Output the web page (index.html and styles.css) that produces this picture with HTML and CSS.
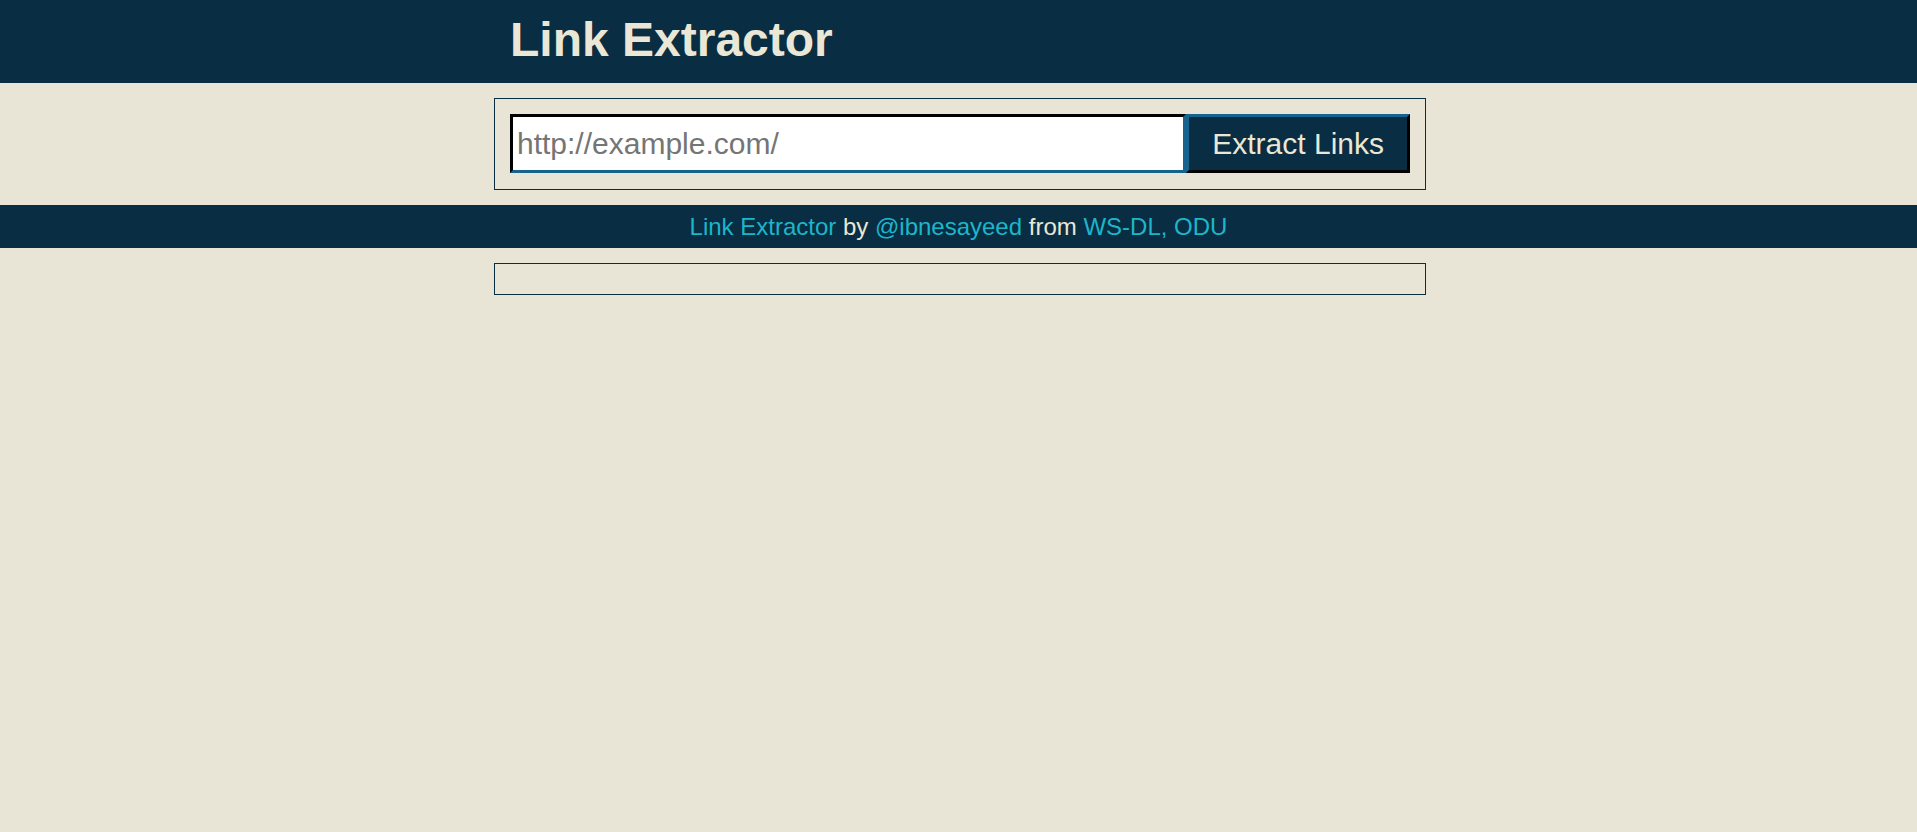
FILE: index.html
```html
<!DOCTYPE html>
<html lang="en">
<head>
<meta charset="utf-8">
<title>Link Extractor</title>
<link rel="stylesheet" href="styles.css">
</head>
<body>
<header class="site-header">
  <div class="wrap">
    <h1 class="site-title">Link Extractor</h1>
  </div>
</header>
<main class="wrap main">
  <form class="panel extract-form">
    <input class="url-input" type="text" placeholder="http://example.com/">
    <button class="extract-btn" type="button">Extract Links</button>
  </form>
</main>
<footer class="credits">
  <a href="#">Link Extractor</a> by <a href="#">@ibnesayeed</a> from <span class="org"><a href="#">WS-DL</a>, <a href="#">ODU</a></span>
</footer>
<section class="wrap results-wrap">
  <div class="panel results"></div>
</section>
</body>
</html>
```

FILE: styles.css
```css
html, body {
  margin: 0;
  padding: 0;
}
body {
  background: #e8e5d6;
  font-family: "Liberation Sans", Arial, sans-serif;
  color: #ebe7d6;
}
.wrap {
  width: 932px;
  margin-left: calc(50% - 464.5px);
  box-sizing: border-box;
}
.site-header {
  background: #092d42;
  height: 83px;
}
.site-header .wrap {
  padding: 12px 16px 16px;
}
.site-title {
  margin: 0;
  font-size: 48px;
  line-height: 55px;
  font-weight: bold;
  color: #ebe7d6;
}
.main {
  padding-top: 15px;
  padding-bottom: 15px;
}
.panel {
  border: 1px solid #0a2e42;
  box-sizing: border-box;
}
.extract-form {
  display: flex;
  margin: 0;
  padding: 15px 15px 16px;
}
.url-input {
  flex: 1;
  min-width: 0;
  height: 59px;
  box-sizing: border-box;
  margin: 0;
  padding: 0 4px;
  border: 3px solid;
  border-color: #000 #17638f #17638f #000;
  background: #fff;
  font-family: "Liberation Sans", Arial, sans-serif;
  font-size: 30px;
  color: #333;
  outline: none;
}
.url-input::placeholder {
  color: #757575;
}
.extract-btn {
  height: 59px;
  box-sizing: border-box;
  margin: 0;
  padding: 0 23px;
  border: 3px solid;
  border-color: #17638f #000 #000 #17638f;
  background: #092d42;
  color: #ebe7d6;
  font-family: "Liberation Sans", Arial, sans-serif;
  font-size: 30px;
  cursor: pointer;
}
.credits {
  background: #092d42;
  text-align: center;
  font-size: 24px;
  line-height: 27px;
  padding: 8px 0;
  color: #ebe7d6;
}
.credits a,
.credits .org {
  color: #1cb6ca;
  text-decoration: none;
}
.results-wrap {
  padding-top: 15px;
}
.results {
  height: 32px;
}
```
